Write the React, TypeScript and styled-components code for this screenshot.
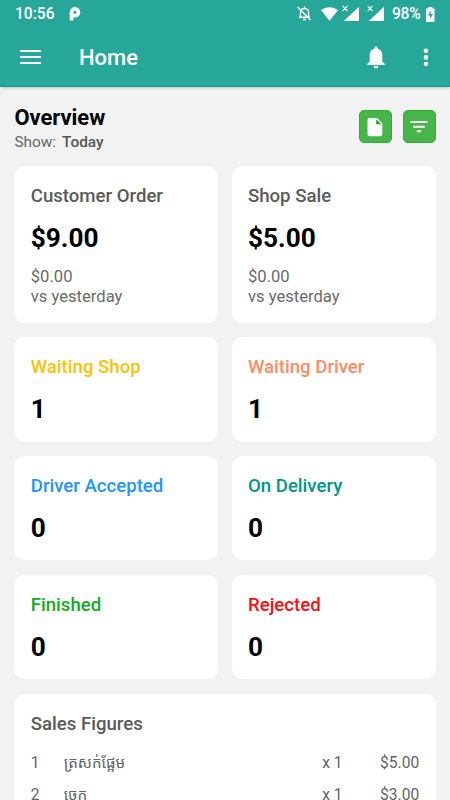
import React from "react";
import styled, { createGlobalStyle } from "styled-components";

const Global = createGlobalStyle`
  * { box-sizing: border-box; }
  html, body { margin: 0; padding: 0; overflow: hidden; }
  body { background: #f2f2f2; font-family: Roboto, "Noto Sans", "Noto Sans Khmer", sans-serif; }
`;

const Screen = styled.div`
  width: 450px;
  height: 800px;
  overflow: hidden;
  display: flex;
  flex-direction: column;
  background: #f2f2f2;
`;

const Header = styled.header`
  flex: none;
  height: 87px;
  background: #27a69a;
  color: #fff;
  border-bottom: 1px solid #0d9f91;
  box-shadow: 0 1px 3px rgba(0, 0, 0, 0.2);
`;

const StatusBar = styled.div`
  height: 28px;
  padding: 0 15px;
  display: flex;
  align-items: center;
  font-size: 15.6px;
  font-weight: 500;
  line-height: 28px;
`;

const Clock = styled.span`
  width: 54px;
`;

const StatusIcons = styled.div`
  margin-left: auto;
  display: flex;
  align-items: center;
  height: 28px;
`;

const Percent = styled.span`
  width: 33px;
  margin-right: 1px;
  letter-spacing: -0.3px;
`;

const Toolbar = styled.div`
  height: 59px;
  padding: 0 21px 0 19px;
  display: flex;
  align-items: center;
`;

const PageTitle = styled.h1`
  margin: 0 auto 0 36px;
  font-size: 22px;
  font-weight: 500;
  line-height: 28px;
`;

const BellSlot = styled.span`
  display: flex;
  margin-right: 38px;
`;

const Content = styled.main`
  padding: 17px 14.4px 0;
  display: flex;
  flex-direction: column;
  gap: 14.4px;
`;

const Overview = styled.section`
  height: 47.6px;
  display: flex;
  justify-content: space-between;
`;

const Heading = styled.h2`
  margin: 0;
  font-size: 21.9px;
  font-weight: 700;
  line-height: 28px;
  color: #000;
`;

const Filter = styled.p`
  margin: 0;
  display: flex;
  gap: 6px;
  font-size: 15.4px;
  line-height: 20px;
  color: #666;
`;

const Period = styled.span`
  font-weight: 500;
  color: #555;
`;

const Actions = styled.div`
  display: flex;
  gap: 11px;
  padding-top: 6px;
`;

const ActionButton = styled.button`
  width: 33px;
  height: 33px;
  padding: 0;
  display: grid;
  place-items: center;
  border: 1px solid #2fb031;
  border-radius: 5px;
  background: #47b549;
`;

const Cards = styled.section`
  display: grid;
  grid-template-columns: 1fr 1fr;
  gap: 14.4px 13.2px;
`;

const Card = styled.article<{ $tall?: boolean }>`
  height: ${(p) => (p.$tall ? 156.8 : 104.4)}px;
  padding: 17px 16.4px;
  border-radius: 11px;
  background: #fff;
`;

const CardTitle = styled.h3<{ $color?: string }>`
  margin: 0;
  font-size: 18.6px;
  font-weight: 500;
  line-height: 26px;
  color: ${(p) => p.$color ?? "#5a5a5a"};
`;

const Amount = styled.div`
  margin-top: 11px;
  font-size: 26.2px;
  font-weight: 700;
  line-height: 36px;
  color: #000;
`;

const Compare = styled.div`
  margin-top: 11px;
  font-size: 16.6px;
  line-height: 19.8px;
  color: #6a6a6a;
`;

const Sales = styled.section`
  height: 160px;
  padding: 17px 16.4px;
  border-radius: 11px;
  background: #fff;
`;

const SalesRow = styled.div`
  display: grid;
  grid-template-columns: 33px 1fr 56px 41px;
  height: 32px;
  font-size: 15.6px;
  line-height: 32px;
  color: #646464;
`;

const SalesRows = styled.div`
  margin-top: 10px;
`;

const Product = styled.span`
  font-size: 15.2px;
`;

const Price = styled.span`
  display: flex;
  justify-content: flex-end;
`;

const stats = [
  { title: "Waiting Shop", value: "1", color: "#ffc107" },
  { title: "Waiting Driver", value: "1", color: "#ff8a65" },
  { title: "Driver Accepted", value: "0", color: "#2196f3" },
  { title: "On Delivery", value: "0", color: "#009688" },
  { title: "Finished", value: "0", color: "#13ad1b" },
  { title: "Rejected", value: "0", color: "#ff0c14" },
];

const sales = [
  { name: "ត្រសក់ផ្អែម", qty: "x 1", price: "$5.00" },
  { name: "ចេក", qty: "x 1", price: "$3.00" },
];

const ParkingMark = () => (
  <svg width="12" height="14" viewBox="0 0 12 14">
    <path d="M2.6 13.5V5.2a3.4 3.4 0 1 1 3.5 3.5H4.2" fill="none" stroke="#fff" strokeWidth="3.8" />
  </svg>
);

const MutedBell = () => (
  <svg width="15" height="16" viewBox="0 0 15 16" fill="none" stroke="#fff" strokeWidth="1.4">
    <path d="M3.4 11V6.5c0-2.4 1.6-4 4.1-4s4.1 1.6 4.1 4V11M2 11.3h11M7.5.5v2M.5 1l13 13" />
    <path d="M6 13.5h3" strokeWidth="1.8" />
  </svg>
);

const Wifi = () => (
  <svg width="17" height="14" viewBox="0 0 17 14">
    <path d="M0 3.3C5-.9 12-.9 17 3.3L8.5 13.8Z" fill="#fff" />
  </svg>
);

const Signal = () => (
  <svg width="18" height="18" viewBox="0 0 18 18">
    <path d="M17 2.7V17H1.8Z" fill="#fff" />
    <path d="m.7 1.8 4.8 5.4M5.5 1.8.7 7.2" stroke="#fff" strokeWidth="1.1" />
  </svg>
);

const SignalSlot = styled.span`
  display: flex;
  margin: -2px 7px 0 0;
`;

const WifiSlot = styled.span`
  display: flex;
  margin: -1px 4px 0 9px;
`;

const Battery = () => (
  <svg width="9" height="15" viewBox="0 0 9 15">
    <path d="M2.3 0h4v1.6H8.5V15H0V1.6h2.3Z" fill="#fff" />
    <path d="M4.8 3.6 2 8.6h2V12l3-5.1H4.8Z" fill="#27a69a" />
  </svg>
);

const Menu = () => (
  <svg width="24" height="20" viewBox="0 0 24 20">
    <path d="M1 3h21M1 9h21M1 15h21" stroke="#fff" strokeWidth="2.2" />
  </svg>
);

const Bell = () => (
  <svg width="18" height="23" viewBox="0 0 18 23" fill="#fff">
    <path d="M7.5 2.5V1.8a1.5 1.5 0 0 1 3 0v.7c3 .8 4.8 3.2 4.8 6.5v6.5l2.5 2.4V19H.2v-1.1l2.5-2.4V9c0-3.3 1.8-5.7 4.8-6.5Z" />
    <path d="M6.6 20h4.8a2.4 2.4 0 0 1-4.8 0Z" />
  </svg>
);

const More = () => (
  <svg width="6" height="20" viewBox="0 0 6 20" fill="#fff">
    <circle cx="3" cy="2.8" r="2.3" />
    <circle cx="3" cy="9.4" r="2.3" />
    <circle cx="3" cy="16" r="2.3" />
  </svg>
);

const FileIcon = () => (
  <svg width="16" height="20" viewBox="0 0 16 20">
    <path d="M2.5 1h7.6L15.3 6.3v11a2 2 0 0 1-2 2H2.5a2 2 0 0 1-2-2V3a2 2 0 0 1 2-2Z" fill="#fff" />
    <path d="M9.2 2.3v5h5" fill="#16a81c" />
  </svg>
);

const FilterIcon = () => (
  <svg width="18" height="14" viewBox="0 0 18 14">
    <path d="M.5 2h17M3.3 6.7h11.4M6.8 11.3h4.4" stroke="#fff" strokeWidth="1.9" />
  </svg>
);

export default function App() {
  return (
    <>
      <Global />
      <Screen>
        <Header>
          <StatusBar>
            <Clock>10:56</Clock>
            <ParkingMark />
            <StatusIcons>
              <MutedBell />
              <WifiSlot><Wifi /></WifiSlot>
              <SignalSlot><Signal /></SignalSlot>
              <SignalSlot><Signal /></SignalSlot>
              <Percent>98%</Percent>
              <Battery />
            </StatusIcons>
          </StatusBar>
          <Toolbar>
            <Menu />
            <PageTitle>Home</PageTitle>
            <BellSlot><Bell /></BellSlot>
            <More />
          </Toolbar>
        </Header>
        <Content>
          <Overview>
            <div>
              <Heading>Overview</Heading>
              <Filter>
                <span>Show:</span>
                <Period>Today</Period>
              </Filter>
            </div>
            <Actions>
              <ActionButton aria-label="Report"><FileIcon /></ActionButton>
              <ActionButton aria-label="Filter"><FilterIcon /></ActionButton>
            </Actions>
          </Overview>
          <Cards>
            <Card $tall>
              <CardTitle>Customer Order</CardTitle>
              <Amount>$9.00</Amount>
              <Compare>$0.00<br />vs yesterday</Compare>
            </Card>
            <Card $tall>
              <CardTitle>Shop Sale</CardTitle>
              <Amount>$5.00</Amount>
              <Compare>$0.00<br />vs yesterday</Compare>
            </Card>
            {stats.map((s) => (
              <Card key={s.title}>
                <CardTitle $color={s.color}>{s.title}</CardTitle>
                <Amount>{s.value}</Amount>
              </Card>
            ))}
          </Cards>
          <Sales>
            <CardTitle>Sales Figures</CardTitle>
            <SalesRows>
              {sales.map((s, i) => (
                <SalesRow key={s.name}>
                  <span>{i + 1}</span>
                  <Product>{s.name}</Product>
                  <span>{s.qty}</span>
                  <Price>{s.price}</Price>
                </SalesRow>
              ))}
            </SalesRows>
          </Sales>
        </Content>
      </Screen>
    </>
  );
}
